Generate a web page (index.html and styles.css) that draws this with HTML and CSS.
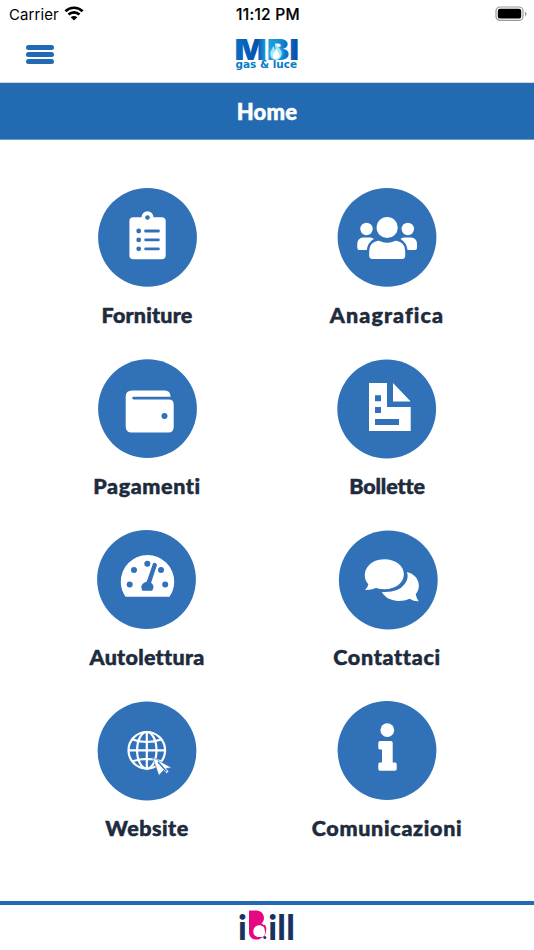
FILE: index.html
```html
<!DOCTYPE html>
<html lang="it">
<head>
<meta charset="utf-8">
<title>Home</title>
<link rel="stylesheet" href="styles.css">
</head>
<body>
<div class="status">
  <div class="carrier"><span>Carrier</span>
    <svg width="20" height="15" viewBox="0 0 20 15"><g fill="none" stroke="#000" stroke-width="2.7"><path d="M1.4 5.2C6.2.6 13.8.6 18.6 5.2"/><path d="M4.5 8.5c3.1-2.9 7.9-2.9 11 0"/></g><path d="M6.7 11.2c1.9-1.700 4.700-1.700 6.600 0L10 14.500z"/></svg>
  </div>
  <div class="time">11:12 PM</div>
  <svg class="battery" width="32" height="16" viewBox="0 0 32 16"><rect x="1" y="1" width="27" height="13.4" rx="4" fill="#fff" stroke="#999" stroke-width="1.2"/><rect x="2.8" y="2.8" width="23.4" height="9.8" rx="2.2"/><path d="M30 5.500c2 .8 2 3.800 0 4.600z" fill="#999"/></svg>
</div>
<header class="topbar">
  <div class="menu"><i></i><i></i><i></i></div>
  <svg class="brand" width="66" height="36" viewBox="234 36 66 36">
    <defs>
      <linearGradient id="mbi" x1="0" y1="0" x2="1" y2="0"><stop offset="0" stop-color="#0870c5"/><stop offset=".35" stop-color="#0750ae"/><stop offset=".5" stop-color="#1ba5e1"/><stop offset=".72" stop-color="#1588d0"/><stop offset="1" stop-color="#0647a5"/></linearGradient>
      <radialGradient id="glow"><stop offset="0" stop-color="#fff"/><stop offset=".45" stop-color="#6cdcf8" stop-opacity=".85"/><stop offset="1" stop-color="#20afe6" stop-opacity="0"/></radialGradient>
    </defs>
    <text class="mbi" x="234.500" y="60" textLength="64.500" lengthAdjust="spacingAndGlyphs" fill="url(#mbi)">MBI</text>
    <ellipse cx="276" cy="53" rx="9" ry="8" fill="url(#glow)"/>
    <path d="M274 41c1 5 8 7 7.500 13c-.4 4-3 6-5.500 6s-5.600-2-5.500-6c.1-4 2-4 2.500-8c2 2 1 4 2 5c2-3 1-6-1-10z" fill="#a5e9fb"/>
    <path d="M276 49c2 3 4 5 3.500 7.500s-6 3.500-6.500 0s2.500-4 3-7.500z" fill="#fff"/>
    <text class="gas" x="235.500" y="67.500" textLength="61.500" lengthAdjust="spacingAndGlyphs">gas &amp; luce</text>
  </svg>
</header>
<h1 class="title">Home</h1>
<main class="grid">
  <a class="tile"><svg viewBox="97 187 100 100"><circle class="disc" cx="147.500" cy="237.300" r="49.400"/><rect x="129.400" y="217.200" width="36.300" height="42" rx="4"/><circle cx="147.500" cy="217.300" r="6"/><g class="cut"><circle cx="147.500" cy="217.500" r="2.300"/><circle cx="138.700" cy="231" r="2.400"/><circle cx="138.700" cy="239.900" r="2.400"/><circle cx="138.700" cy="248.800" r="2.400"/><rect x="144.300" y="229.600" width="15.400" height="2.800" rx="1"/><rect x="144.300" y="238.500" width="15.400" height="2.800" rx="1"/><rect x="144.300" y="247.400" width="15.400" height="2.800" rx="1"/></g></svg><span class="l1">Forniture</span></a>
  <a class="tile"><svg viewBox="337 187 100 100"><circle class="disc" cx="387" cy="237.300" r="49.400"/><circle cx="387.200" cy="227.500" r="10.600"/><circle cx="366.500" cy="229" r="6.200"/><circle cx="407.800" cy="229" r="6.200"/><path d="M357.300 248v-4q0-6 6-6.500h7q2.500.3 3.500 1.500q-6 3.500-7 11h-7.500q-2 0-2-2zM417 248v-4q0-6-6-6.500h-7q-2.500.3-3.500 1.500q6 3.500 7 11h7.500q2 0 2-2zM369.200 256v-5q.3-9 8.800-10.300q1.500-.2 3 .7q6.200 2.500 12.400 0q1.500-.9 3-.7q8.500 1.300 8.800 10.300v5q-.2 2.900-3 3h-30q-2.800-.1-3-3z"/></svg><span class="l2">Anagrafica</span></a>
  <a class="tile"><svg viewBox="97 358 100 100"><circle class="disc" cx="147.500" cy="408.700" r="49.400"/><path d="M132 390.500h33q5.200 0 5.700 6.200h-37q-1.500 0-1.500 1.400t1.500 1.400h35.300q4.700 0 4.700 5v22.500q0 5.600-5.500 5.600h-36.500q-6 0-6-6v-30q0-6.100 6.300-6.100z"/><circle class="cut" cx="164.500" cy="416" r="3"/></svg><span class="l3">Pagamenti</span></a>
  <a class="tile"><svg viewBox="337 358 100 100"><circle class="disc" cx="386.700" cy="409" r="49.400"/><path d="M369 383h18v24h23.700v24H369zM393 383v18.600h17.700z"/><path class="cut" d="M375 395.300h6v6h-6zM375 407h6v6h-6zM375 419h24v6h-24z"/></svg><span class="l4">Bollette</span></a>
  <a class="tile"><svg viewBox="97 529 100 100"><circle class="disc" cx="146.500" cy="579.500" r="49.400"/><path d="M125.500 596.700q-4.700-7-4.700-15a26.700 26.700 0 0 1 53.400 0q0 8-4.700 15z"/><g class="cut"><circle cx="134" cy="570" r="3"/><circle cx="147.300" cy="563.800" r="3"/><circle cx="161" cy="570" r="3"/><circle cx="129.700" cy="584.500" r="3"/><circle cx="165.200" cy="584.500" r="3"/><path d="M142.300 590.700q-2.800-5.500 2.200-8.200q1.500-.6 2.200-.7l6.100-17.800q.9-1.600 2.700-1t1.300 2.500l-5.700 17.200q4.200 3 1.100 8z"/></g></svg><span class="l5">Autolettura</span></a>
  <a class="tile"><svg viewBox="337 529 100 100"><circle class="disc" cx="388.300" cy="580" r="49.400"/><path d="M381.700 592q16.500 1 23-8q4.500-6 2.200-12c13 3 14.600 16.500 8.800 22.300q.6 3.700 3 6.900q-5 .2-9-2.500c-11 4.500-23 2-28-6.700z"/><path d="M384.500 559.300c11 0 19.400 6.500 19.400 15s-8.400 15-19.400 15q-4.500 0-8.500-1.300q-5 2.200-10.800 2q2.600-2.800 3.200-5.700c-8-8.500-2.300-25 16.100-25z"/></svg><span class="l6">Contattaci</span></a>
  <a class="tile"><svg viewBox="97 700 100 100"><circle class="disc" cx="147" cy="751" r="49.400"/><g class="globe"><circle cx="146.800" cy="750.300" r="18.300"/><ellipse cx="146.800" cy="750.300" rx="9.700" ry="18.300"/><path d="M146.800 732v36.600M128.500 750.300h36.600M132.500 739.500q14.300 5 28.600 0M132.500 761.300q14.300-5 28.600 0"/></g><path class="cursor" d="M152.500 757.300l19.200 10.400l-5.500.8l2.600 3l-2.300 2l-3-3.200l-4.600 5.200z"/><path class="slit" d="M158 762l8.500 9.500"/></svg><span class="l7">Website</span></a>
  <a class="tile"><svg viewBox="337 700 100 100"><circle class="disc" cx="387" cy="750.500" r="49.400"/><circle cx="387.300" cy="730.100" r="6.900"/><path d="M380 741h11q1.700 0 1.700 1.700v19.900h2.300q1.700 0 1.700 1.700v4.700q0 1.800-1.700 1.800h-15q-1.700 0-1.700-1.800v-4.700q0-1.700 1.700-1.700h2v-13h-2q-1.700 0-1.700-1.700v-5.200q0-1.700 1.700-1.700z"/></svg><span class="l8">Comunicazioni</span></a>
</main>
<footer class="footer">
  <svg width="56" height="34" viewBox="239 908 56 34">
    <g class="ibill"><text x="238" y="939.500">i</text><text x="268.300" y="939.500" textLength="26.500" lengthAdjust="spacing">ill</text></g>
    <path d="M249 911.500q0-1 1-1h6.500c7.500 0 9.700 9 5 12.800c7 4.500 6.500 14.500-4.500 16.200c-5 .3-8-2.800-8-7.500z" fill="#e6087e"/>
    <path d="M253.300 931.500c0-8.500 12-8.200 12 0q0 4-3 5.500h-5c-2.500-.5-4-2.500-4-5.500z" fill="#fff"/>
    <path d="M254 936q2 2.500 5.500 2.500" stroke="#e6087e" stroke-width="2" fill="none"/>
    <path d="M265.300 931q1-3-1-6" stroke="#e6087e" stroke-width="1.500" fill="none"/>
    <circle cx="264.800" cy="937.500" r="1.500" fill="#18335f"/>
  </svg>
</footer>
</body>
</html>
```
FILE: styles.css
```css
* { box-sizing: border-box; }
body { margin: 0; width: 534px; height: 950px; overflow: hidden; background: #fff; display: flex; flex-direction: column; font-family: Lato, sans-serif; }
.status { height: 28px; flex: none; display: grid; grid-template-columns: 1fr auto 1fr; align-items: center; padding: 0 7px 0 9px; font-family: Inter, sans-serif; font-size: 15px; color: #000; }
.carrier { display: flex; align-items: center; gap: 5px; letter-spacing: .1px; }
.carrier svg { margin-top: -2px; }
.time { font-weight: 500; font-size: 15.500px; letter-spacing: .25px; -webkit-text-stroke: .2px #000; }
.battery { justify-self: end; margin-top: -1px; }
.topbar { height: 55px; flex: none; display: grid; grid-template-columns: 1fr auto 1fr; padding: 8px 26px 0; border-bottom: 1px solid #d3d6da; }
.brand { overflow: visible; }
.menu { width: 28px; display: flex; flex-direction: column; gap: 2.300px; padding-top: 8.500px; }
.menu i { height: 5px; border-radius: 2.500px; background: #226bb4; flex: none; }
.mbi { font-family: Inter, sans-serif; font-weight: 900; font-size: 29px; }
.gas { font: 700 10px "DejaVu Sans", sans-serif; fill: #087bc8; }
.title { flex: none; margin: 0; height: 57px; background: #226bb2; color: #fff; display: flex; align-items: center; justify-content: center; font-size: 22px; font-weight: 900; letter-spacing: .2px; -webkit-text-stroke: .5px #fff; border-bottom: 1px solid #6c9dcc; }
.grid { flex: 1; display: grid; grid-template-columns: 240px 240px; grid-auto-rows: 171px; justify-content: center; padding-top: 47px; }
.tile { display: flex; flex-direction: column; align-items: center; color: #1d2b3d; font-size: 21.500px; line-height: 28px; font-weight: 900; font-variant-ligatures: none; -webkit-text-stroke: .5px #1d2b3d; white-space: nowrap; }
.tile svg { width: 100px; height: 100px; overflow: visible; fill: #fff; flex: none; -webkit-text-stroke: 0; }
.tile span { margin-top: 14px; }
.l1 { letter-spacing: .2px; }
.l2 { letter-spacing: 1.100px; }
.l3 { letter-spacing: .600px; }
.l4 { letter-spacing: -.1px; }
.l5 { letter-spacing: .300px; }
.l6 { letter-spacing: .700px; }
.l7 { letter-spacing: .500px; }
.l8 { letter-spacing: .700px; }
.tile .disc, .tile .cut { fill: #3071b8; }
.globe { fill: none; stroke: #fff; stroke-width: 2.200; }
.cursor { stroke: #3071b8; stroke-width: .6; }
.slit { stroke: #3071b8; stroke-width: 1.300; }
.footer { flex: none; height: 49px; border-top: 4px solid #226bb2; display: flex; justify-content: center; padding-top: 3px; }
.footer svg { overflow: visible; }
.ibill { font: 900 34px Lato, sans-serif; fill: #18335f; }
```
